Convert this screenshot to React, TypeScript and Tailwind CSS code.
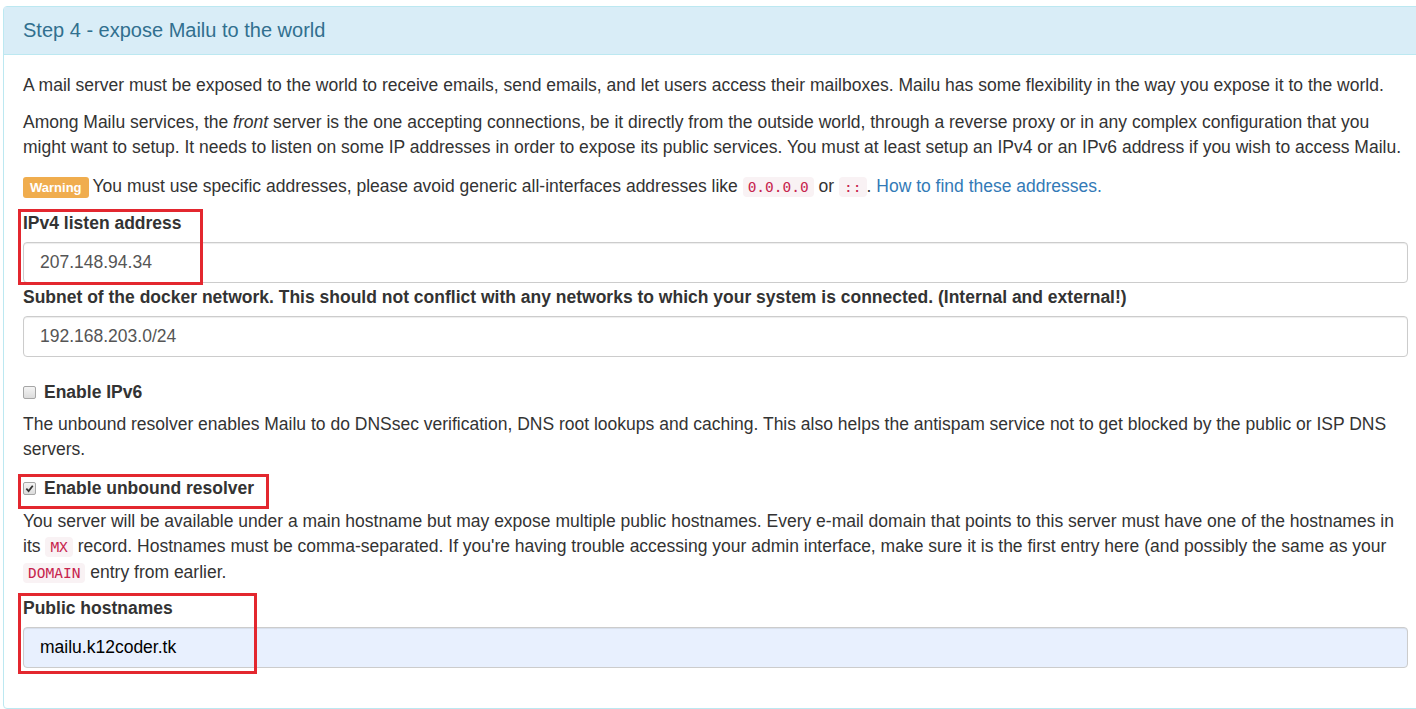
const code = "rounded-[4px] bg-[#f9f2f4] px-[5px] py-[2px] font-['DejaVu_Sans_Mono',monospace] text-[14.5px] text-[#c7254e]";

function Field({ label, value, autofill }: { label: string; value: string; autofill?: boolean }) {
  return (
    <div className="flex flex-col">
      <label className="mb-[6px] font-bold leading-[25px]">{label}</label>
      <div
        className={`flex h-[41px] items-center rounded-[4px] border border-[#ccc] px-[16px] shadow-[inset_0_1px_1px_rgba(0,0,0,0.075)] ${
          autofill ? "bg-[#e8f0fe] text-black" : "bg-white text-[#555]"
        }`}
      >
        {value}
      </div>
    </div>
  );
}

function Check({ label, checked }: { label: string; checked?: boolean }) {
  return (
    <div className="flex items-center gap-[8px] font-bold">
      <span className="flex h-[13px] w-[13px] items-center justify-center rounded-[2px] border border-[#a6a6a6] bg-gradient-to-b from-[#f4f4f4] to-[#dcdcdc]">
        {checked && (
          <svg viewBox="0 0 10 10" className="h-[9px] w-[9px]">
            <path d="M1.5 5.2 L4 7.8 L8.6 2" fill="none" stroke="#333" strokeWidth="2" />
          </svg>
        )}
      </span>
      {label}
    </div>
  );
}

export default function App() {
  return (
    <div className="relative h-[709px] w-[1416px] overflow-hidden bg-white pl-[3px] pt-[6px] font-['Liberation_Sans',Arial,sans-serif] text-[17.5px] text-[#333]">
      <div className="w-[1425px] rounded-[4px] border border-[#bce8f1]">
        <div className="flex h-[48px] items-center border-b border-[#bce8f1] bg-[#d9edf7] px-[19px] pb-[2px] text-[20px] text-[#31708f]">
          Step 4 - expose Mailu to the world
        </div>

        <div className="flex flex-col px-[19px] pt-[18px] pb-[40px] leading-[25px]">
          <p className="mb-[12px]">
            A mail server must be exposed to the world to receive emails, send emails, and let users access their mailboxes. Mailu has some flexibility in the way you expose it to the world.
          </p>
          <p className="mb-[14px]">
            Among Mailu services, the <em>front</em> server is the one accepting connections, be it directly from the outside world, through a reverse proxy or in any complex configuration that you might want to setup. It needs to listen on some IP addresses in order to expose its public services. You must at least setup an IPv4 or an IPv6 address if you wish to access Mailu.
          </p>
          <p className="mb-[11px]">
            <span className="mr-[4px] rounded-[3px] bg-[#f0ad4e] px-[7px] py-[3px] text-[13px] font-bold text-white">Warning</span>
            You must use specific addresses, please avoid generic all-interfaces addresses like <code className={code}>0.0.0.0</code> or <code className={code}>::</code>.{" "}
            <a className="text-[#337ab7]">How to find these addresses.</a>
          </p>

          <Field label="IPv4 listen address" value="207.148.94.34" />
          <div className="h-[2px]" />
          <Field label="Subnet of the docker network. This should not conflict with any networks to which your system is connected. (Internal and external!)" value="192.168.203.0/24" />

          <div className="mt-[23px] mb-[7px]">
            <Check label="Enable IPv6" />
          </div>
          <p className="mb-[14px]">
            The unbound resolver enables Mailu to do DNSsec verification, DNS root lookups and caching. This also helps the antispam service not to get blocked by the public or ISP DNS servers.
          </p>
          <div className="mb-[8px]">
            <Check label="Enable unbound resolver" checked />
          </div>
          <p className="mb-[10px]">
            You server will be available under a main hostname but may expose multiple public hostnames. Every e-mail domain that points to this server must have one of the hostnames in its <code className={code}>MX</code> record. Hostnames must be comma-separated. If you're having trouble accessing your admin interface, make sure it is the first entry here (and possibly the same as your <code className={code}>DOMAIN</code> entry from earlier.
          </p>
          <Field label="Public hostnames" value="mailu.k12coder.tk" autofill />
        </div>
      </div>

      <div className="absolute left-[18px] top-[209px] h-[76px] w-[185px] border-[3px] border-[#e3272f]" />
      <div className="absolute left-[18px] top-[474px] h-[35px] w-[251px] border-[3px] border-[#e3272f]" />
      <div className="absolute left-[18px] top-[593px] h-[81px] w-[239px] border-[3px] border-[#e3272f]" />
    </div>
  );
}
